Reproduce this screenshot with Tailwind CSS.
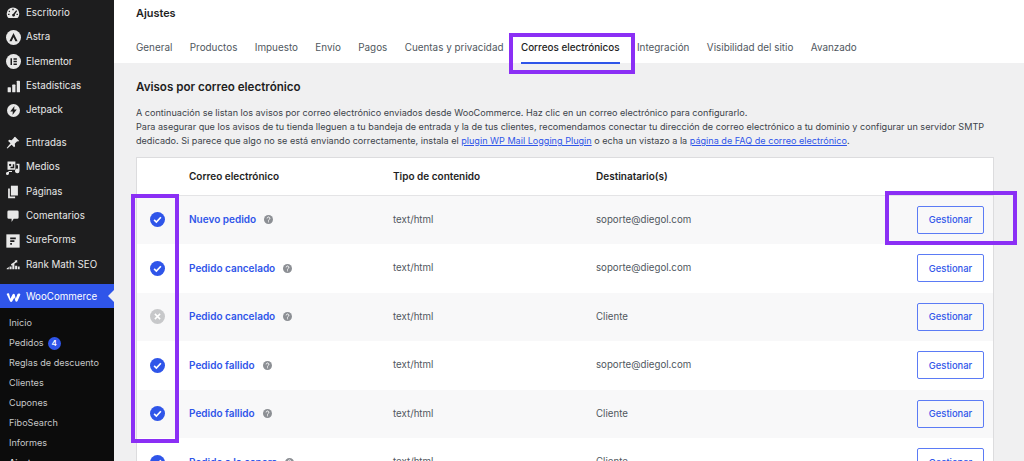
<!DOCTYPE html>
<html><head><meta charset="utf-8">
<script src="https://cdn.jsdelivr.net/npm/@tailwindcss/browser@4"></script>
</head>
<body class="m-0 bg-[#f0f0f1]">
<div class="relative flex h-[461px] w-[1024px] overflow-hidden bg-[#f0f0f1] font-['Inter',sans-serif] text-[#50575e]">
  <aside class="h-full w-[114px] shrink-0 bg-[#1d1d1e] text-[9.750px] text-[#e8e8e8]">
    <div class="flex h-[24.4px] items-center pt-[2px]"><span class="flex w-[26px] justify-center"><svg class="h-[14px] w-[14px]" viewBox="0 0 20 20" fill="#e8e8e8"><path d="M10 2a9 9 0 0 0-9 9c0 2.6 1 4.6 2.6 6h12.8c1.6-1.4 2.6-3.400 2.600-6a9 9 0 0 0-9-9zM9 4h2v2H9zM4.500 6.500l1.500 1.500-1 1-1.500-1.500zM3 11h2v2H3zm12 0h2v2h-2zm-.5-5l1.500 1-3.500 5a2 2 0 1 1-2-1z" fill-rule="evenodd"/></svg></span><span>Escritorio</span></div>
    <div class="flex h-[24.4px] items-center pt-[2px]"><span class="flex w-[26px] justify-center"><svg class="h-[15px] w-[15px]" viewBox="0 0 20 20"><circle cx="10" cy="10" r="10" fill="#e8e8e8"/><path d="M10 4l5.500 11h-3L10 9.500 7.500 15h-3z" fill="#1d1d1e"/></svg></span><span>Astra</span></div>
    <div class="flex h-[24.4px] items-center pt-[2px]"><span class="flex w-[26px] justify-center"><svg class="h-[15px] w-[15px]" viewBox="0 0 20 20"><circle cx="10" cy="10" r="10" fill="#e8e8e8"/><path d="M6 5.500h2v9H6zM10 5.500h4.500v2H10zM10 9h4.500v2H10zM10 12.500h4.500v2H10z" fill="#1d1d1e"/></svg></span><span>Elementor</span></div>
    <div class="flex h-[24.4px] items-center pt-[2px]"><span class="flex w-[26px] justify-center"><svg class="h-[13px] w-[13px]" viewBox="0 0 20 20" fill="#e8e8e8"><rect x="1" y="11" width="5" height="8" rx="1"/><rect x="8" y="7" width="5" height="12" rx="1"/><rect x="15" y="1" width="5" height="18" rx="1"/></svg></span><span>Estadísticas</span></div>
    <div class="flex h-[24.4px] items-center pt-[2px]"><span class="flex w-[26px] justify-center"><svg class="h-[13px] w-[13px]" viewBox="0 0 20 20"><circle cx="10" cy="10" r="10" fill="#e8e8e8"/><path d="M11.500 3l-6.500 8.500h4L8.500 17l6.500-8.500h-4z" fill="#1d1d1e"/></svg></span><span>Jetpack</span></div>
    <div class="h-2"></div>
    <div class="flex h-[24.4px] items-center pt-[2px]"><span class="flex w-[26px] justify-center"><svg class="h-[14px] w-[14px]" viewBox="0 0 20 20" fill="#e8e8e8"><path d="M13 1l6 6-2 1-1-.5-3.500 3.500.5 3.500-1.500 1.500-3.500-3.500L2 18l-1-1 5.500-6.500L3 7l1.500-1.500L8 6l3.500-3.500L11 2z"/></svg></span><span>Entradas</span></div>
    <div class="flex h-[24.4px] items-center pt-[2px]"><span class="flex w-[26px] justify-center"><svg class="h-[15px] w-[15px]" viewBox="0 0 20 20" fill="#e8e8e8"><path fill-rule="evenodd" d="M2 2h10.500v11H2zM5.500 5a1.500 1.500 0 1 0 .01 0zM9 5.500v3.500H6v2h5V5.500z"/><path d="M14 5h4v9.500a3 3 0 1 1-2-2.800V7h-2zM4 14.500h4v1.500H4v2a2 2 0 1 1-1.500-2z"/></svg></span><span>Medios</span></div>
    <div class="flex h-[24.4px] items-center pt-[2px]"><span class="flex w-[26px] justify-center"><svg class="h-[14px] w-[14px]" viewBox="0 0 20 20" fill="#e8e8e8"><path d="M7 1h10v14H7z"/><path d="M3 5h2.500v11.500H13V19H3z"/></svg></span><span>Páginas</span></div>
    <div class="flex h-[24.4px] items-center pt-[2px]"><span class="flex w-[26px] justify-center"><svg class="h-[14px] w-[14px]" viewBox="0 0 20 20" fill="#e8e8e8"><path d="M4 2h12a2 2 0 0 1 2 2v8a2 2 0 0 1-2 2h-5l-3 4.500V14H4a2 2 0 0 1-2-2V4a2 2 0 0 1 2-2z"/></svg></span><span>Comentarios</span></div>
    <div class="flex h-[24.4px] items-center pt-[2px]"><span class="flex w-[26px] justify-center"><svg class="h-[14px] w-[14px]" viewBox="0 0 20 20"><rect width="19" height="19" x=".5" y=".5" fill="#e8e8e8"/><path d="M6 5h8v2.400H6zM6 9h6v2.400H6zM6 13h2.500v2.500H6z" fill="#1d1d1e"/></svg></span><span>SureForms</span></div>
    <div class="flex h-[24.4px] items-center pt-[2px]"><span class="flex w-[26px] justify-center"><svg class="h-[14px] w-[14px]" viewBox="0 0 20 20" fill="#e8e8e8"><path d="M1 15l3-2v3H1zM5 12h3v4H5zM9 8h3v8H9zM13 11h3v5h-3zM17 12h2.500v4H17zM7 9l6-4-1-1 4-1v4l-1-1-7 5z"/></svg></span><span>Rank Math SEO</span></div>
    <div class="h-2"></div>
    <div class="relative flex h-6 items-center bg-[#2f55e9] pt-[2px] text-white"><span class="flex w-[26px] justify-center"><svg class="ml-[1px] h-[11px] w-[15px]" viewBox="0 0 24 16" fill="#fff"><path d="M1 2.500C2 1 4 1 5 2l2 8 3.500-7c.8-1.500 3-1.500 3.500 0l1.500 7 3-7.500C19 1 22.500 1 23 3l-4.500 10.500c-.8 1.600-3 1.600-3.500 0L13.500 8 10 14c-.8 1.400-3 1.400-3.600-.2z"/></svg></span><span>WooCommerce</span><span class="absolute right-0 top-[6px] h-0 w-0 border-y-[6px] border-r-[6px] border-y-transparent border-r-[#f0f0f1]"></span></div>
    <div class="bg-[#0c0c0c] pt-[5px] text-[9.100px] text-[#c6c7c8]">
      <div class="flex h-5 items-center whitespace-nowrap pl-[9px]">Inicio</div>
      <div class="flex h-5 items-center whitespace-nowrap pl-[9px]">Pedidos<span class="ml-[4px] flex h-[13px] w-[13px] items-center justify-center rounded-full bg-[#2f55e9] text-[8px] font-semibold text-white">4</span></div>
      <div class="flex h-5 items-center whitespace-nowrap pl-[9px]">Reglas de descuento</div>
      <div class="flex h-5 items-center whitespace-nowrap pl-[9px]">Clientes</div>
      <div class="flex h-5 items-center whitespace-nowrap pl-[9px]">Cupones</div>
      <div class="flex h-5 items-center whitespace-nowrap pl-[9px]">FiboSearch</div>
      <div class="flex h-5 items-center whitespace-nowrap pl-[9px]">Informes</div>
      <div class="flex h-5 items-center whitespace-nowrap pl-[9px] text-white">Ajustes</div>
    </div>
  </aside>
  <main class="min-w-0 flex-1">
    <header class="h-[63px] bg-white pl-[22px]">
      <h1 class="pt-[5px] text-[10.900px] font-semibold leading-[17px] text-[#1e1e1e]">Ajustes</h1>
      <nav class="mt-[15px] flex gap-[17.400px] text-[9.900px] leading-[21px]">
        <span>General</span><span>Productos</span><span>Impuesto</span><span>Envío</span><span>Pagos</span><span>Cuentas y privacidad</span>
        <span class="relative font-medium text-[#1e1e1e]">Correos electrónicos<span class="absolute inset-x-0 top-[25px] h-[1.500px] bg-[#2f55e9]"></span></span>
        <span>Integración</span><span>Visibilidad del sitio</span><span>Avanzado</span>
      </nav>
    </header>
    <section class="pl-[22px] pr-[30px]">
      <h2 class="pt-[14px] text-[11.600px] font-semibold leading-[20px] text-[#1e1e1e]">Avisos por correo electrónico</h2>
      <div class="mt-[9px] w-[870px] text-[9.100px] leading-[14px] text-[#3c434a]">
        <p class="whitespace-nowrap">A continuación se listan los avisos por correo electrónico enviados desde WooCommerce. Haz clic en un correo electrónico para configurarlo.</p>
        <p class="whitespace-nowrap">Para asegurar que los avisos de tu tienda lleguen a tu bandeja de entrada y la de tus clientes, recomendamos conectar tu dirección de correo electrónico a tu dominio y configurar un servidor SMTP</p>
        <p class="whitespace-nowrap">dedicado. Si parece que algo no se está enviando correctamente, instala el <a class="text-[#2f55e9] underline">plugin WP Mail Logging Plugin</a> o echa un vistazo a la <a class="text-[#2f55e9] underline">página de FAQ de correo electrónico</a>.</p>
      </div>
      <div class="mt-[9px] w-[858px] border border-[#dcdcde] bg-white text-[9.700px] text-[#50575e]">
        <div class="flex h-[37.500px] items-center border-b-[1.500px] border-[#e4e4e6] text-[10px] font-semibold text-[#1e1e1e]">
          <span class="ml-[52px] w-[204px]">Correo electrónico</span><span class="w-[203px]">Tipo de contenido</span><span>Destinatario(s)</span>
        </div>
        <div class="flex h-[48.500px] items-center bg-[#f8f8f9]">
          <span class="flex w-[52px] justify-start pl-[13px]"><svg class="h-[15px] w-[15px]" viewBox="0 0 20 20"><circle cx="10" cy="10" r="10" fill="#2f55e9"/><path d="M5.500 10.500l3 3 6-6.500" stroke="#fff" stroke-width="2.200" fill="none"/></svg></span>
          <span class="flex w-[204px] items-center gap-[8px] text-[10px] font-semibold text-[#2f55e9]">Nuevo pedido<svg class="h-[9px] w-[9px]" viewBox="0 0 20 20"><circle cx="10" cy="10" r="10" fill="#8c8f94"/><path d="M7 7.500a3 3 0 1 1 4.500 2.600c-1 .6-1.500 1-1.500 2.400M10 14.200v2" stroke="#fff" stroke-width="2.200" fill="none"/></svg></span>
          <span class="w-[203px] pt-px">text/html</span><span class="w-[321px] pt-px">soporte@diegol.com</span>
          <span class="flex h-[28px] w-[67px] items-center justify-center rounded-[2px] border border-[#5b7bf5] pt-px text-[9.400px] font-medium text-[#2f55e9]">Gestionar</span>
        </div>
        <div class="flex h-[48.500px] items-center bg-white">
          <span class="flex w-[52px] justify-start pl-[13px]"><svg class="h-[15px] w-[15px]" viewBox="0 0 20 20"><circle cx="10" cy="10" r="10" fill="#2f55e9"/><path d="M5.500 10.500l3 3 6-6.500" stroke="#fff" stroke-width="2.200" fill="none"/></svg></span>
          <span class="flex w-[204px] items-center gap-[8px] text-[10px] font-semibold text-[#2f55e9]">Pedido cancelado<svg class="h-[9px] w-[9px]" viewBox="0 0 20 20"><circle cx="10" cy="10" r="10" fill="#8c8f94"/><path d="M7 7.500a3 3 0 1 1 4.500 2.600c-1 .6-1.500 1-1.500 2.400M10 14.200v2" stroke="#fff" stroke-width="2.200" fill="none"/></svg></span>
          <span class="w-[203px] pt-px">text/html</span><span class="w-[321px] pt-px">soporte@diegol.com</span>
          <span class="flex h-[28px] w-[67px] items-center justify-center rounded-[2px] border border-[#5b7bf5] pt-px text-[9.400px] font-medium text-[#2f55e9]">Gestionar</span>
        </div>
        <div class="flex h-[48.500px] items-center bg-[#f8f8f9]">
          <span class="flex w-[52px] justify-start pl-[13px]"><svg class="h-[15px] w-[15px]" viewBox="0 0 20 20"><circle cx="10" cy="10" r="10" fill="#c7c8ca"/><path d="M6.500 6.500l7 7M13.500 6.500l-7 7" stroke="#fff" stroke-width="2"/></svg></span>
          <span class="flex w-[204px] items-center gap-[8px] text-[10px] font-semibold text-[#2f55e9]">Pedido cancelado<svg class="h-[9px] w-[9px]" viewBox="0 0 20 20"><circle cx="10" cy="10" r="10" fill="#8c8f94"/><path d="M7 7.500a3 3 0 1 1 4.500 2.600c-1 .6-1.500 1-1.500 2.400M10 14.200v2" stroke="#fff" stroke-width="2.200" fill="none"/></svg></span>
          <span class="w-[203px] pt-px">text/html</span><span class="w-[321px] pt-px">Cliente</span>
          <span class="flex h-[28px] w-[67px] items-center justify-center rounded-[2px] border border-[#5b7bf5] pt-px text-[9.400px] font-medium text-[#2f55e9]">Gestionar</span>
        </div>
        <div class="flex h-[48.500px] items-center bg-white">
          <span class="flex w-[52px] justify-start pl-[13px]"><svg class="h-[15px] w-[15px]" viewBox="0 0 20 20"><circle cx="10" cy="10" r="10" fill="#2f55e9"/><path d="M5.500 10.500l3 3 6-6.500" stroke="#fff" stroke-width="2.200" fill="none"/></svg></span>
          <span class="flex w-[204px] items-center gap-[8px] text-[10px] font-semibold text-[#2f55e9]">Pedido fallido<svg class="h-[9px] w-[9px]" viewBox="0 0 20 20"><circle cx="10" cy="10" r="10" fill="#8c8f94"/><path d="M7 7.500a3 3 0 1 1 4.500 2.600c-1 .6-1.500 1-1.500 2.400M10 14.200v2" stroke="#fff" stroke-width="2.200" fill="none"/></svg></span>
          <span class="w-[203px] pt-px">text/html</span><span class="w-[321px] pt-px">soporte@diegol.com</span>
          <span class="flex h-[28px] w-[67px] items-center justify-center rounded-[2px] border border-[#5b7bf5] pt-px text-[9.400px] font-medium text-[#2f55e9]">Gestionar</span>
        </div>
        <div class="flex h-[48.500px] items-center bg-[#f8f8f9]">
          <span class="flex w-[52px] justify-start pl-[13px]"><svg class="h-[15px] w-[15px]" viewBox="0 0 20 20"><circle cx="10" cy="10" r="10" fill="#2f55e9"/><path d="M5.500 10.500l3 3 6-6.500" stroke="#fff" stroke-width="2.200" fill="none"/></svg></span>
          <span class="flex w-[204px] items-center gap-[8px] text-[10px] font-semibold text-[#2f55e9]">Pedido fallido<svg class="h-[9px] w-[9px]" viewBox="0 0 20 20"><circle cx="10" cy="10" r="10" fill="#8c8f94"/><path d="M7 7.500a3 3 0 1 1 4.500 2.600c-1 .6-1.500 1-1.500 2.400M10 14.200v2" stroke="#fff" stroke-width="2.200" fill="none"/></svg></span>
          <span class="w-[203px] pt-px">text/html</span><span class="w-[321px] pt-px">Cliente</span>
          <span class="flex h-[28px] w-[67px] items-center justify-center rounded-[2px] border border-[#5b7bf5] pt-px text-[9.400px] font-medium text-[#2f55e9]">Gestionar</span>
        </div>
        <div class="flex h-[48.500px] items-center bg-white">
          <span class="flex w-[52px] justify-start pl-[13px]"><svg class="h-[15px] w-[15px]" viewBox="0 0 20 20"><circle cx="10" cy="10" r="10" fill="#2f55e9"/><path d="M5.500 10.500l3 3 6-6.500" stroke="#fff" stroke-width="2.200" fill="none"/></svg></span>
          <span class="flex w-[204px] items-center gap-[8px] text-[10px] font-semibold text-[#2f55e9]">Pedido a la espera<svg class="h-[9px] w-[9px]" viewBox="0 0 20 20"><circle cx="10" cy="10" r="10" fill="#8c8f94"/><path d="M7 7.500a3 3 0 1 1 4.500 2.600c-1 .6-1.500 1-1.500 2.400M10 14.200v2" stroke="#fff" stroke-width="2.200" fill="none"/></svg></span>
          <span class="w-[203px] pt-px">text/html</span><span class="w-[321px] pt-px">Cliente</span>
          <span class="flex h-[28px] w-[67px] items-center justify-center rounded-[2px] border border-[#5b7bf5] pt-px text-[9.400px] font-medium text-[#2f55e9]">Gestionar</span>
        </div>
      </div>
    </section>
  </main>
  <div class="absolute left-[509px] top-[33px] h-[41px] w-[126px] border-[4px] border-[#8b2ff5]"></div>
  <div class="absolute left-[131px] top-[194px] h-[249px] w-[48px] border-[4px] border-[#8b2ff5]"></div>
  <div class="absolute left-[885px] top-[191px] h-[54px] w-[132px] border-[4px] border-[#8b2ff5]"></div>
</div>
</body></html>
